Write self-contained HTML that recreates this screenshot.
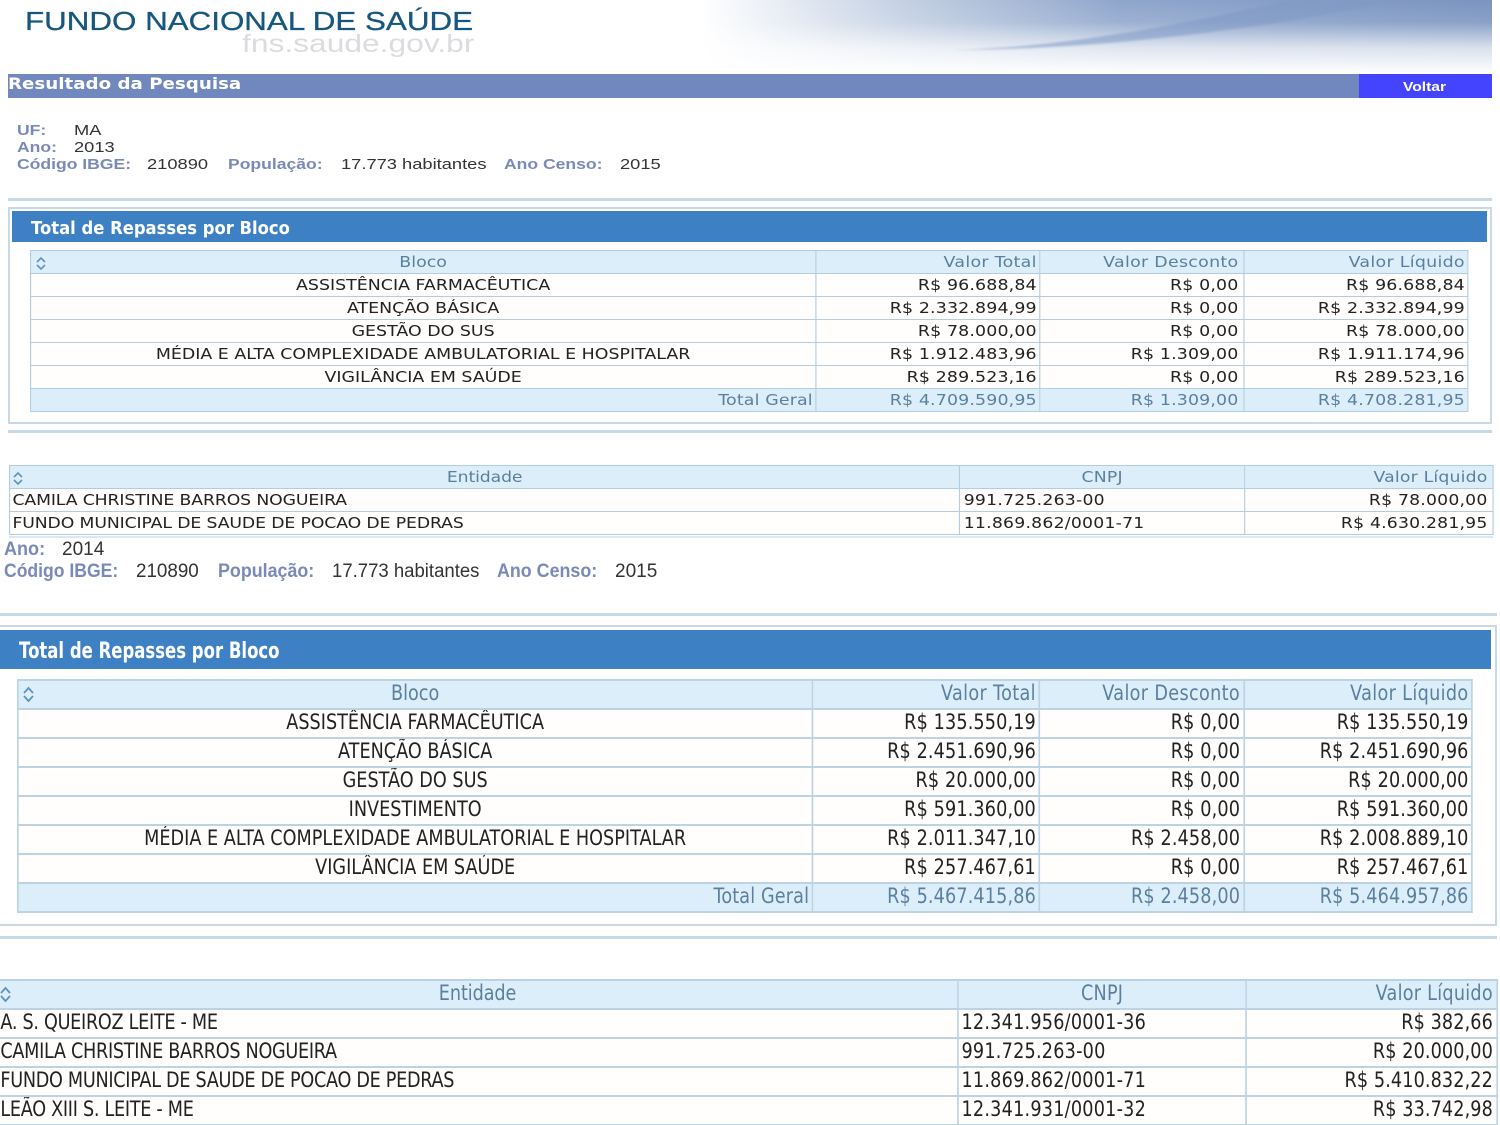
<!DOCTYPE html>
<html lang="pt-BR"><head><meta charset="utf-8"><title>Fundo Nacional de Saúde</title>
<style>
html,body{margin:0;padding:0;background:#fff;width:1500px;height:1125px;overflow:hidden}
body{position:relative;font-family:"Liberation Sans",sans-serif}
.a{position:absolute;white-space:nowrap;transform-origin:0 0}
.line{position:absolute;background:#c5d9e8;height:3px}
.box{position:absolute;border:2px solid #c8d8e4;box-sizing:border-box;background:#fff}
.sec{position:absolute;background:#3d80c4}
.sect{color:#fff;font-family:"DejaVu Sans",sans-serif;font-weight:bold}
.l{color:#7a8ab8;font-weight:bold}.v{color:#333}
.i1{font-size:15px}.i2{font-size:19px}
.i1.l{transform:scaleX(1.17)}.i1.v{transform:scaleX(1.22)}
.l,.v,.sect{filter:blur(.25px)}
table{position:absolute;border-collapse:collapse;table-layout:fixed;transform-origin:0 0;font-family:"DejaVu Sans",sans-serif;color:#222;filter:blur(.3px)}
td{border:1px solid #b3cde0;padding:0 3px;white-space:nowrap;overflow:hidden;background:#fffefd;line-height:1}
.h td,.t td{background:#ddeefb;color:#5b7f9e}
.r{text-align:right}.c{text-align:center}
.t1 td,.t2 td{font-size:15px}
.t3 td,.t4 td{font-size:21px;border-width:2px;border-color:#bcd3e4;padding-bottom:2px}
.t1 tr,.t2 tr{height:23px}
.t3 tr,.t4 tr{height:29px}
.t1 td.r{letter-spacing:.12px;padding-right:2px}
.t1 td:nth-child(3).r{padding-right:4px}
.t1 .h td.r{letter-spacing:.25px}
.t2 td:nth-child(1){letter-spacing:-.1px}
.t2 td:nth-child(2){letter-spacing:.2px}
.t2 td:nth-child(3){letter-spacing:.17px;padding-right:4px}
.t3 td.r{letter-spacing:.15px;padding-right:3px}
.t3 td:nth-child(3).r{padding-right:4px}
.t3 .h td.r{letter-spacing:.4px}
.t4 td:nth-child(1){letter-spacing:-.35px;padding-left:2px}
.t4 td:nth-child(2){letter-spacing:.26px}
.t4 td:nth-child(3){letter-spacing:.12px;padding-right:4px}
.t4 .h td:nth-child(1){letter-spacing:-.1px}
.t4 .h td:nth-child(3){letter-spacing:.3px}
svg.s{position:absolute}
</style></head><body>
<svg class="a" style="left:0;top:0" width="1492" height="74"><defs>
<linearGradient id="g" x1="0" x2="1" y1="0" y2="0"><stop offset="0" stop-color="#fff"/><stop offset=".47" stop-color="#fff"/><stop offset=".6" stop-color="#c6d2e4"/><stop offset=".75" stop-color="#8fa6cc"/><stop offset="1" stop-color="#7a94c0"/></linearGradient>
<linearGradient id="f" x1="0" x2="0" y1="0" y2="1"><stop offset="0" stop-color="#fff" stop-opacity="0"/><stop offset=".3" stop-color="#fff" stop-opacity=".12"/><stop offset=".65" stop-color="#fff" stop-opacity=".72"/><stop offset="1" stop-color="#fff"/></linearGradient>
<filter id="b"><feGaussianBlur stdDeviation="1"/></filter></defs>
<rect width="1492" height="74" fill="url(#g)"/><rect width="1492" height="74" fill="url(#f)"/>
<path d="M950 50C1060 48 1180 25 1290 0H1400C1300 22 1120 50 950 50Z" fill="#7f99c6" opacity=".55" filter="url(#b)"/>
</svg>
<div class="a" style="left:25px;top:6px;font-size:26px;color:#17577f;transform:scaleX(1.205);-webkit-text-stroke:.3px #17577f">FUNDO NACIONAL DE SAÚDE</div>
<div class="a" style="left:242px;top:30px;font-size:25px;color:#dadcdf;transform:scaleX(1.27)">fns.saude.gov.br</div>
<div class="a" style="left:8px;top:74px;width:1484px;height:24px;background:#7088bd"></div>
<div class="a" style="left:8px;top:74px;color:#fff;font:bold 16px 'DejaVu Sans',sans-serif;transform:scaleX(1.14)">Resultado da Pesquisa</div>
<div class="a" style="left:1359px;top:74px;width:133px;height:24px;background:#4444ff"></div>
<div class="a" style="left:1403px;top:79px;color:#fff;font-size:13px;font-weight:bold;transform:scaleX(1.2)">Voltar</div>

<div class="a l i1" style="left:17px;top:122px">UF:</div><div class="a v i1" style="left:74px;top:122px">MA</div>
<div class="a l i1" style="left:17px;top:139px">Ano:</div><div class="a v i1" style="left:74px;top:139px">2013</div>
<div class="a l i1" style="left:17px;top:156px">Código IBGE:</div><div class="a v i1" style="left:147px;top:156px">210890</div>
<div class="a l i1" style="left:228px;top:156px">População:</div><div class="a v i1" style="left:341px;top:156px">17.773 habitantes</div>
<div class="a l i1" style="left:504px;top:156px">Ano Censo:</div><div class="a v i1" style="left:620px;top:156px">2015</div>

<div class="line" style="left:8px;top:198px;width:1484px"></div>
<div class="box" style="left:8px;top:207px;width:1484px;height:217px"></div>
<div class="sec" style="left:12px;top:211px;width:1475px;height:31px"></div>
<div class="a sect" style="left:31px;top:218px;font-size:18px;transform:scaleX(.911)">Total de Repasses por Bloco</div>

<table class="t1" style="left:30px;top:250px;width:1239px;transform:scaleX(1.16)">
<colgroup><col style="width:676.8px"><col style="width:193.1px"><col style="width:175.9px"><col style="width:193.2px"></colgroup>
<tr class="h"><td class="c">Bloco</td><td class="r">Valor Total</td><td class="r">Valor Desconto</td><td class="r">Valor Líquido</td></tr>
<tr><td class="c">ASSISTÊNCIA FARMACÊUTICA</td><td class="r">R$ 96.688,84</td><td class="r">R$ 0,00</td><td class="r">R$ 96.688,84</td></tr>
<tr><td class="c">ATENÇÃO BÁSICA</td><td class="r">R$ 2.332.894,99</td><td class="r">R$ 0,00</td><td class="r">R$ 2.332.894,99</td></tr>
<tr><td class="c">GESTÃO DO SUS</td><td class="r">R$ 78.000,00</td><td class="r">R$ 0,00</td><td class="r">R$ 78.000,00</td></tr>
<tr><td class="c">MÉDIA E ALTA COMPLEXIDADE AMBULATORIAL E HOSPITALAR</td><td class="r">R$ 1.912.483,96</td><td class="r">R$ 1.309,00</td><td class="r">R$ 1.911.174,96</td></tr>
<tr><td class="c">VIGILÂNCIA EM SAÚDE</td><td class="r">R$ 289.523,16</td><td class="r">R$ 0,00</td><td class="r">R$ 289.523,16</td></tr>
<tr class="t"><td class="r">Total Geral</td><td class="r">R$ 4.709.590,95</td><td class="r">R$ 1.309,00</td><td class="r">R$ 4.708.281,95</td></tr>
</table>
<svg class="s" style="left:35px;top:256px" width="12" height="14" fill="none" stroke="#5d93bd" stroke-width="1.6"><path d="M2 6L6 2L10 6M2 9L6 13L10 9"/></svg>

<div class="line" style="left:8px;top:430px;width:1484px"></div>

<table class="t2" style="left:9px;top:465px;width:1289.7px;transform:scaleX(1.15)">
<colgroup><col style="width:826.2px"><col style="width:247.8px"><col style="width:215.7px"></colgroup>
<tr class="h"><td class="c">Entidade</td><td class="c">CNPJ</td><td class="r">Valor Líquido</td></tr>
<tr><td style="padding-left:2px">CAMILA CHRISTINE BARROS NOGUEIRA</td><td>991.725.263-00</td><td class="r">R$ 78.000,00</td></tr>
<tr><td style="padding-left:2px">FUNDO MUNICIPAL DE SAUDE DE POCAO DE PEDRAS</td><td>11.869.862/0001-71</td><td class="r">R$ 4.630.281,95</td></tr>
</table>
<svg class="s" style="left:12px;top:471px" width="12" height="14" fill="none" stroke="#5d93bd" stroke-width="1.6"><path d="M2 6L6 2L10 6M2 9L6 13L10 9"/></svg>
<div class="line" style="left:9px;top:536px;width:1484px;height:2px;background:#dbe8f1"></div>

<div class="a l i2" style="left:4px;top:539px;transform:scaleX(.95)">Ano:</div><div class="a v i2" style="left:62px;top:539px;transform:scaleX(1)">2014</div>
<div class="a l i2" style="left:4px;top:561px;transform:scaleX(.925)">Código IBGE:</div><div class="a v i2" style="left:136px;top:561px;transform:scaleX(.99)">210890</div>
<div class="a l i2" style="left:218px;top:561px;transform:scaleX(.94)">População:</div><div class="a v i2" style="left:332px;top:561px;transform:scaleX(.976)">17.773 habitantes</div>
<div class="a l i2" style="left:497px;top:561px;transform:scaleX(.94)">Ano Censo:</div><div class="a v i2" style="left:615px;top:561px;transform:scaleX(1)">2015</div>

<div class="line" style="left:0;top:613px;width:1497px"></div>
<div class="box" style="left:-3px;top:625px;width:1500px;height:301px"></div>
<div class="sec" style="left:0;top:630px;width:1491px;height:39px"></div>
<div class="a sect" style="left:19px;top:639px;font-size:22px;transform:scaleX(.75)">Total de Repasses por Bloco</div>

<table class="t3" style="left:17px;top:679px;width:1731px;transform:scaleX(.84)">
<colgroup><col style="width:946px"><col style="width:270px"><col style="width:244px"><col style="width:271px"></colgroup>
<tr class="h"><td class="c">Bloco</td><td class="r">Valor Total</td><td class="r">Valor Desconto</td><td class="r">Valor Líquido</td></tr>
<tr><td class="c">ASSISTÊNCIA FARMACÊUTICA</td><td class="r">R$ 135.550,19</td><td class="r">R$ 0,00</td><td class="r">R$ 135.550,19</td></tr>
<tr><td class="c">ATENÇÃO BÁSICA</td><td class="r">R$ 2.451.690,96</td><td class="r">R$ 0,00</td><td class="r">R$ 2.451.690,96</td></tr>
<tr><td class="c">GESTÃO DO SUS</td><td class="r">R$ 20.000,00</td><td class="r">R$ 0,00</td><td class="r">R$ 20.000,00</td></tr>
<tr><td class="c">INVESTIMENTO</td><td class="r">R$ 591.360,00</td><td class="r">R$ 0,00</td><td class="r">R$ 591.360,00</td></tr>
<tr><td class="c">MÉDIA E ALTA COMPLEXIDADE AMBULATORIAL E HOSPITALAR</td><td class="r">R$ 2.011.347,10</td><td class="r">R$ 2.458,00</td><td class="r">R$ 2.008.889,10</td></tr>
<tr><td class="c">VIGILÂNCIA EM SAÚDE</td><td class="r">R$ 257.467,61</td><td class="r">R$ 0,00</td><td class="r">R$ 257.467,61</td></tr>
<tr class="t"><td class="r">Total Geral</td><td class="r">R$ 5.467.415,86</td><td class="r">R$ 2.458,00</td><td class="r">R$ 5.464.957,86</td></tr>
</table>
<svg class="s" style="left:22px;top:686px" width="13" height="17" fill="none" stroke="#5d93bd" stroke-width="1.8"><path d="M2 7L6.5 2L11 7M2 10L6.5 15L11 10"/></svg>

<div class="line" style="left:0;top:936px;width:1497px"></div>

<table class="t4" style="left:-3px;top:979px;width:1784.9px;transform:scaleX(.84)">
<colgroup><col style="width:1143.2px"><col style="width:342.9px"><col style="width:298.8px"></colgroup>
<tr class="h"><td class="c">Entidade</td><td class="c">CNPJ</td><td class="r">Valor Líquido</td></tr>
<tr><td>A. S. QUEIROZ LEITE - ME</td><td>12.341.956/0001-36</td><td class="r">R$ 382,66</td></tr>
<tr><td>CAMILA CHRISTINE BARROS NOGUEIRA</td><td>991.725.263-00</td><td class="r">R$ 20.000,00</td></tr>
<tr><td>FUNDO MUNICIPAL DE SAUDE DE POCAO DE PEDRAS</td><td>11.869.862/0001-71</td><td class="r">R$ 5.410.832,22</td></tr>
<tr><td>LEÃO XIII S. LEITE - ME</td><td>12.341.931/0001-32</td><td class="r">R$ 33.742,98</td></tr>
</table>
<svg class="s" style="left:0;top:986px" width="13" height="17" fill="none" stroke="#5d93bd" stroke-width="1.8"><path d="M1 7L5.5 2L10 7M1 10L5.5 15L10 10"/></svg>
</body></html>
